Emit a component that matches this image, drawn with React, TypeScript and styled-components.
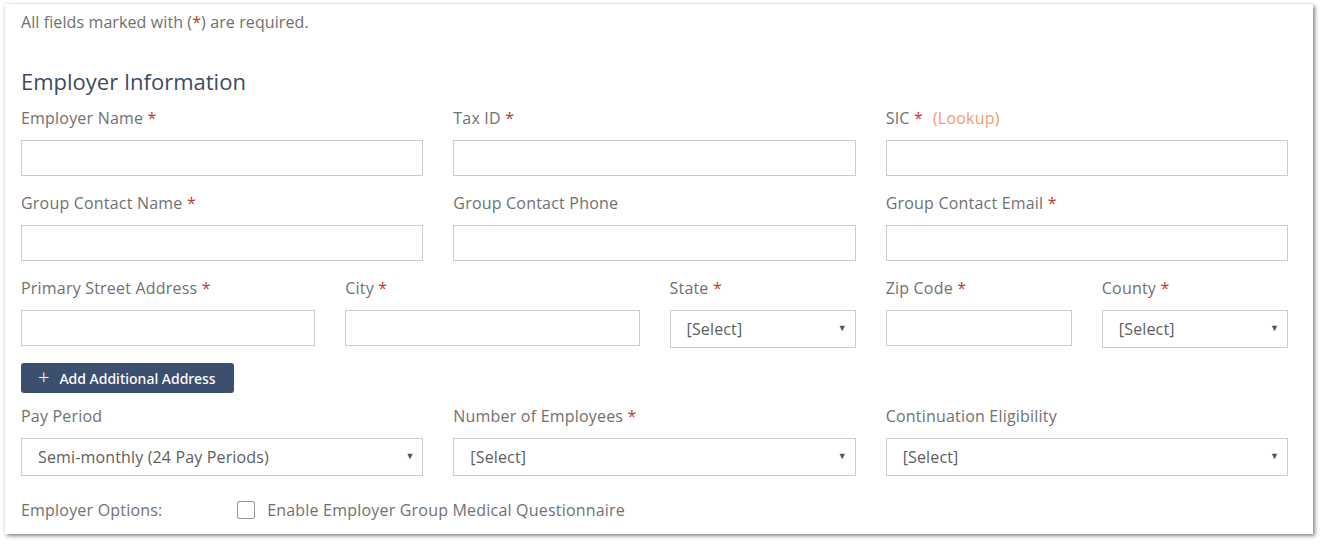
import React from 'react'
import styled, { createGlobalStyle } from 'styled-components'

const GlobalStyle = createGlobalStyle`
  html, body {
    margin: 0;
    padding: 0;
    background: #ffffff;
    min-height: 544px;
  }
  body {
    font-family: 'Open Sans', 'Noto Sans', sans-serif;
    color: #6f6f6f;
  }
  * {
    box-sizing: border-box;
  }
`

type Option = string

const Field = ({
  label,
  required,
  lookup,
  span,
  select,
}: {
  label: string
  required?: boolean
  lookup?: boolean
  span: number
  select?: Option
}) => (
  <Col span={span}>
    <Label>
      {label}
      {required && <Star> *</Star>}
      {lookup && <Lookup>(Lookup)</Lookup>}
    </Label>
    {select ? (
      <SelectWrap>
        <Select defaultValue={select}>
          <option>{select}</option>
        </Select>
        <Caret>▼</Caret>
      </SelectWrap>
    ) : (
      <Input type="text" />
    )}
  </Col>
)

export default function App() {
  return (
    <>
      <GlobalStyle />
      <Card>
        <Note>
          All fields marked with (<Star>*</Star>) are required.
        </Note>
        <Heading>Employer Information</Heading>

        <Row>
          <Field span={4} label="Employer Name" required />
          <Field span={4} label="Tax ID" required />
          <Field span={4} label="SIC" required lookup />
        </Row>
        <Row>
          <Field span={4} label="Group Contact Name" required />
          <Field span={4} label="Group Contact Phone" />
          <Field span={4} label="Group Contact Email" required />
        </Row>
        <Row>
          <Field span={3} label="Primary Street Address" required />
          <Field span={3} label="City" required />
          <Field span={2} label="State" required select="[Select]" />
          <Field span={2} label="Zip Code" required />
          <Field span={2} label="County" required select="[Select]" />
        </Row>

        <AddButton type="button">
          <Plus>+</Plus>
          Add Additional Address
        </AddButton>

        <Row>
          <Field span={4} label="Pay Period" select="Semi-monthly (24 Pay Periods)" />
          <Field span={4} label="Number of Employees" required select="[Select]" />
          <Field span={4} label="Continuation Eligibility" select="[Select]" />
        </Row>

        <OptionsRow>
          <Col span={2}>
            <Label>Employer Options:</Label>
          </Col>
          <CheckLabel>
            <Box type="checkbox" />
            Enable Employer Group Medical Questionnaire
          </CheckLabel>
        </OptionsRow>
      </Card>
    </>
  )
}

const Card = styled.div`
  margin: 4px 0 0 5px;
  width: 1308px;
  height: 530px;
  padding: 7px 25px 0 16px;
  background: #fff;
  box-shadow: 2px 2px 4px rgba(0, 0, 0, 0.45), 0 0 3px rgba(0, 0, 0, 0.12);
`

const Note = styled.div`
  font-size: 16px;
  line-height: 22px;
  letter-spacing: 0.1px;
  color: #6f6f6f;
`

const Heading = styled.h2`
  margin: 33px 0 11px;
  font-size: 22px;
  line-height: 30px;
  font-weight: 400;
  color: #3e4b66;
`

const Row = styled.div`
  display: grid;
  grid-template-columns: repeat(12, 1fr);
  column-gap: 30px;
  margin-bottom: 16px;
`

const Col = styled.div<{ span: number }>`
  grid-column: span ${({ span }) => span};
  display: flex;
  flex-direction: column;
`

const Label = styled.label`
  font-size: 16px;
  line-height: 22px;
  letter-spacing: 0.2px;
  margin-bottom: 11px;
  color: #717171;
  white-space: nowrap;
`

const Star = styled.span`
  color: #c0392b;
`

const Lookup = styled.span`
  margin-left: 10px;
  color: #f49b6f;
`

const Input = styled.input`
  height: 36px;
  width: 100%;
  border: 1px solid #cccccc;
  background: #fff;
  outline: none;
  padding: 0 16px;
  font: inherit;
`

const SelectWrap = styled.div`
  position: relative;
  height: 38px;
`

const Select = styled.select`
  appearance: none;
  width: 100%;
  height: 38px;
  border: 1px solid #cccccc;
  border-radius: 0;
  background: #fff;
  padding: 0 30px 0 16px;
  font-family: 'Open Sans', sans-serif;
  font-size: 16px;
  letter-spacing: 0.15px;
  color: #5e5e5e;
  outline: none;
`

const Caret = styled.span`
  position: absolute;
  right: 9px;
  top: 12px;
  font-size: 9px;
  line-height: 12px;
  color: #555;
  pointer-events: none;
`

const AddButton = styled.button`
  display: flex;
  align-items: center;
  gap: 10px;
  height: 30px;
  width: 213px;
  margin: -1px 0 12px;
  padding: 0 0 0 17px;
  border: none;
  border-radius: 3px;
  background: #3c4f6e;
  color: #fff;
  font-family: 'Noto Sans', 'Open Sans', sans-serif;
  font-size: 14px;
  font-weight: 500;
`

const Plus = styled.span`
  font-size: 20px;
  font-weight: 300;
  line-height: 20px;
  margin-top: -2px;
`

const OptionsRow = styled(Row)`
  margin-top: 23px;
  align-items: center;
`

const CheckLabel = styled.label`
  grid-column: span 10;
  display: flex;
  align-items: center;
  gap: 12px;
  font-size: 16px;
  line-height: 22px;
  letter-spacing: 0.2px;
  color: #717171;
  margin-bottom: 11px;
`

const Box = styled.input`
  appearance: none;
  margin: 0;
  width: 18px;
  height: 18px;
  border: 1px solid #999;
  border-radius: 2px;
  background: #fff;
`
